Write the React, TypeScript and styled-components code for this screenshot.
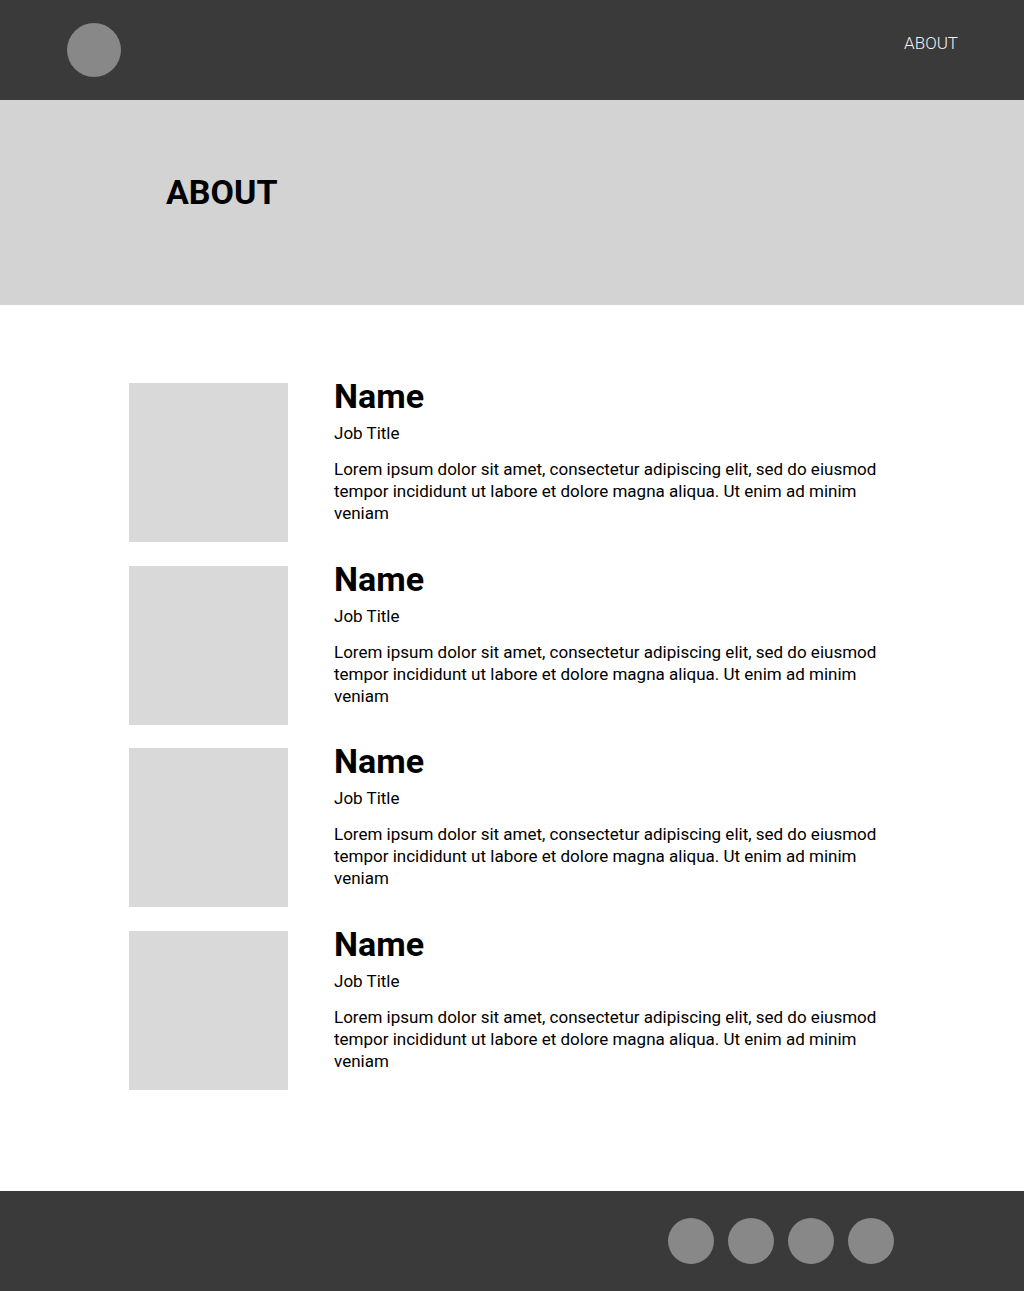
import React from "react";
import styled, { createGlobalStyle } from "styled-components";

const Global = createGlobalStyle`
  html, body { margin: 0; padding: 0; background: #ffffff; }
  body { font-family: Roboto, "Liberation Sans", sans-serif; color: #000; }
  * { box-sizing: border-box; }
`;

const Page = styled.div`
  display: flex;
  flex-direction: column;
  min-height: 1291px;
`;

const Header = styled.header`
  height: 100px;
  background: #3a3a3a;
  display: flex;
  align-items: center;
  justify-content: space-between;
  padding: 0 66px 0 67px;
`;

const Dot = styled.div<{ $size: number }>`
  width: ${(p) => p.$size}px;
  height: ${(p) => p.$size}px;
  border-radius: 50%;
  background: #888888;
  flex: none;
`;

const NavLink = styled.a`
  color: #f2f2f2;
  font-size: 17px;
  font-weight: 300;
  text-decoration: none;
  align-self: flex-start;
  margin-top: 33px;
`;

const Hero = styled.section`
  height: 205px;
  background: #d3d3d3;
  padding: 70px 0 0 166px;
`;

const HeroTitle = styled.h1`
  margin: 0;
  font-size: 34px;
  font-weight: 700;
  line-height: 44px;
`;

const Team = styled.main`
  flex: 1;
  display: flex;
  flex-direction: column;
  gap: 23.5px;
  padding: 78px 0 0 129px;
`;

const Member = styled.article`
  display: flex;
  gap: 46px;
  align-items: flex-start;
`;

const Photo = styled.div`
  width: 159px;
  height: 159px;
  background: #d9d9d9;
  flex: none;
`;

const Info = styled.div`
  display: flex;
  flex-direction: column;
  width: 560px;
  margin-top: -7px;
`;

const Name = styled.h2`
  margin: 0;
  font-size: 34px;
  font-weight: 700;
  line-height: 40px;
`;

const JobTitle = styled.div`
  font-size: 17px;
  line-height: 22px;
  margin-top: 6px;
`;

const Bio = styled.p`
  margin: 14px 0 0;
  font-size: 17px;
  line-height: 22px;
`;

const Footer = styled.footer`
  height: 100px;
  background: #3a3a3a;
  display: flex;
  align-items: center;
  justify-content: flex-end;
  gap: 14px;
  padding-right: 130px;
`;

const lorem =
  "Lorem ipsum dolor sit amet, consectetur adipiscing elit, sed do eiusmod tempor incididunt ut labore et dolore magna aliqua. Ut enim ad minim veniam";

export default function App() {
  return (
    <Page>
      <Global />
      <Header>
        <Dot $size={54} />
        <NavLink href="#">ABOUT</NavLink>
      </Header>
      <Hero>
        <HeroTitle>ABOUT</HeroTitle>
      </Hero>
      <Team>
        {[0, 1, 2, 3].map((i) => (
          <Member key={i}>
            <Photo />
            <Info>
              <Name>Name</Name>
              <JobTitle>Job Title</JobTitle>
              <Bio>{lorem}</Bio>
            </Info>
          </Member>
        ))}
      </Team>
      <Footer>
        {[0, 1, 2, 3].map((i) => (
          <Dot key={i} $size={46} />
        ))}
      </Footer>
    </Page>
  );
}
